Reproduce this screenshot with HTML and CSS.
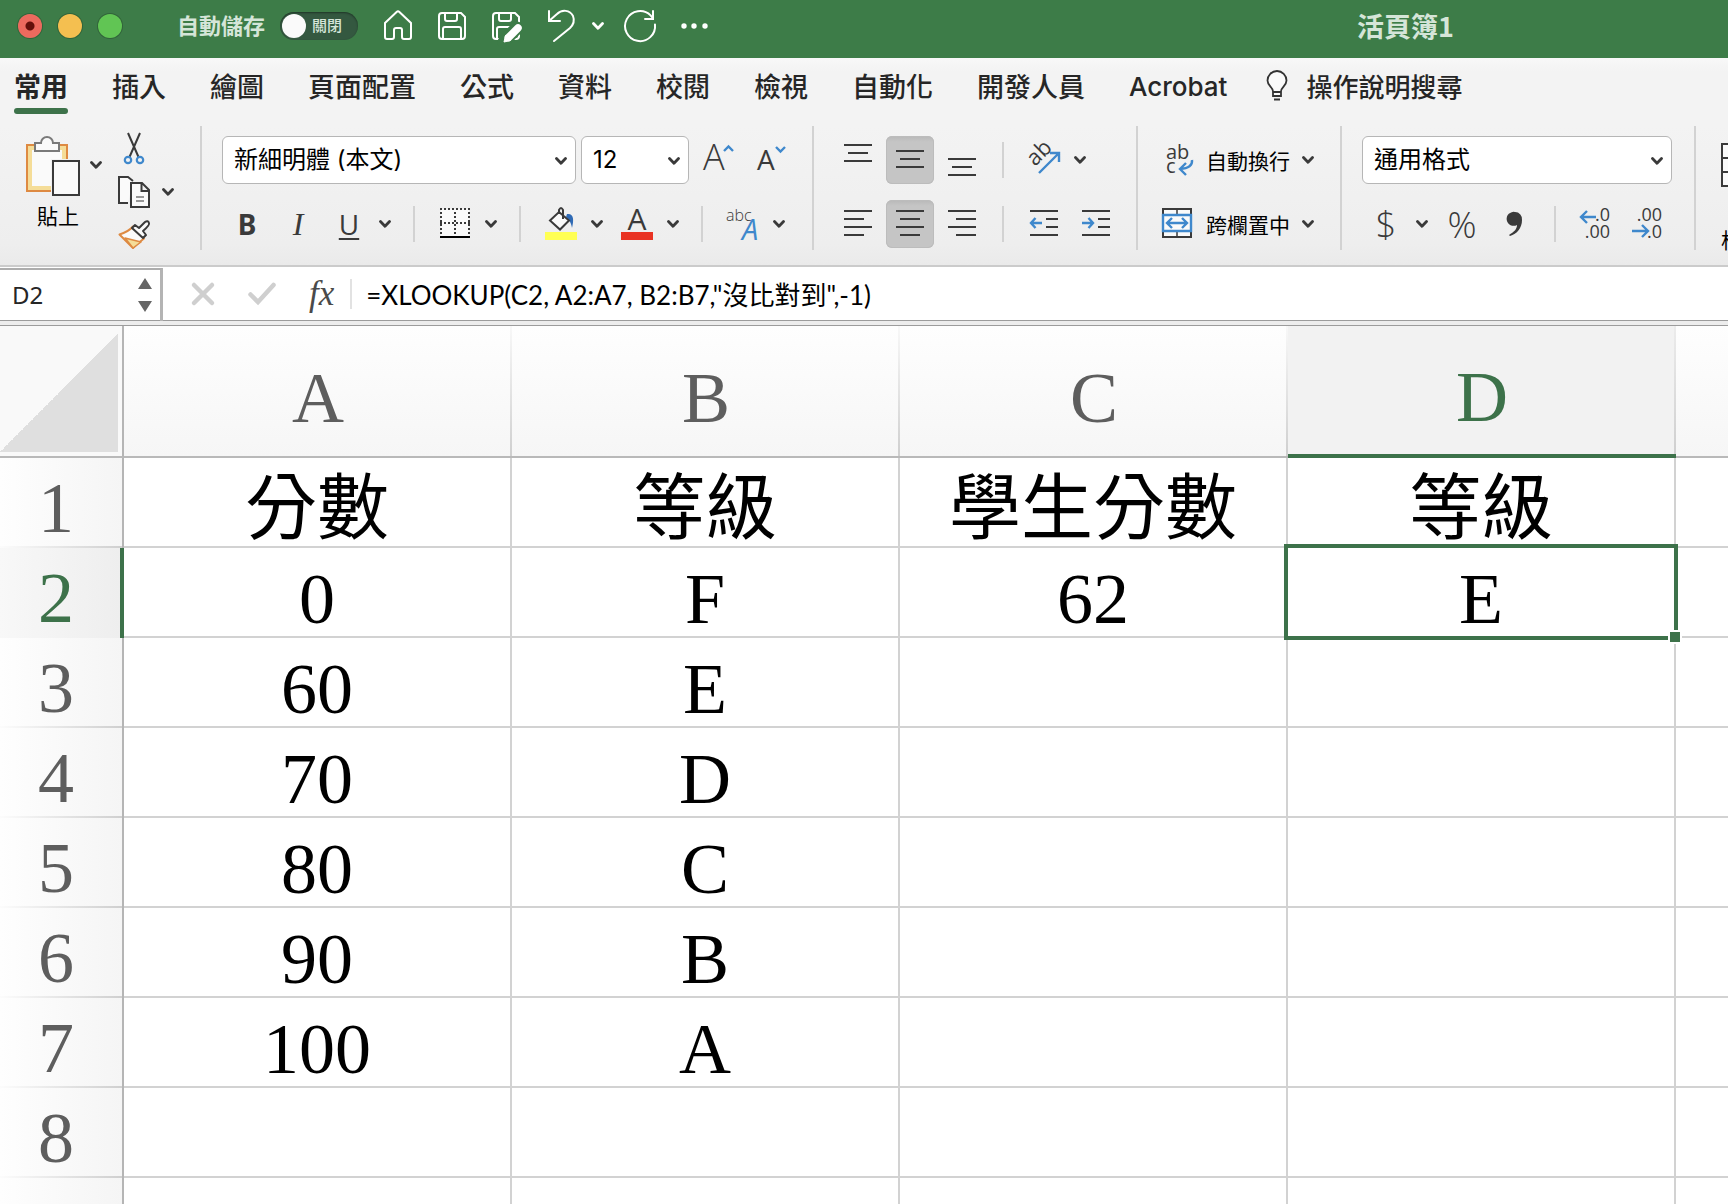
FILE: index.html
```html
<!DOCTYPE html>
<html lang="zh-Hant">
<head>
    <meta charset="UTF-8">
    <meta name="viewport" content="width=device-width, initial-scale=1.0">
    <title>活頁簿1</title>
    <link rel="stylesheet" href="styles.css">
</head>
<body>

<!-- Shared symbols -->
<svg class="sprite" aria-hidden="true">
    <symbol id="chevron" viewBox="0 0 12 8"><path d="M1.5 1.5L6 6.2L10.5 1.5" fill="none" stroke="currentColor" stroke-width="2.8" stroke-linecap="round" stroke-linejoin="round"/></symbol>
    <symbol id="floppy" viewBox="0 0 32 32"><path d="M6 3H25L29 7V26a3 3 0 0 1-3 3H6a3 3 0 0 1-3-3V6a3 3 0 0 1 3-3zM9 3v6a2 2 0 0 0 2 2h8a2 2 0 0 0 2-2V3M7 29V19a2 2 0 0 1 2-2h14a2 2 0 0 1 2 2v10" fill="none" stroke="currentColor" stroke-width="2"/></symbol>
</svg>

<!-- Title bar -->
<header class="titlebar">
    <div class="lights">
        <span class="light red"></span>
        <span class="light yellow"></span>
        <span class="light green"></span>
    </div>
    <label class="autosave">自動儲存
        <input type="checkbox">
        <span class="switch"><span class="knob"></span>關閉</span>
    </label>
    <div class="quick">
        <button aria-label="首頁"><svg width="32" height="32" fill="none" stroke="#fff" stroke-width="2"><path d="M3 13L14.6 2a2 2 0 0 1 2.8 0L29 13V27a2 2 0 0 1-2 2h-5a2 2 0 0 1-2-2v-7a2 2 0 0 0-2-2h-4a2 2 0 0 0-2 2v7a2 2 0 0 1-2 2H5a2 2 0 0 1-2-2z"/></svg></button>
        <button aria-label="儲存"><svg width="32" height="32"><use href="#floppy"/></svg></button>
        <button aria-label="另存新檔"><svg width="32" height="32"><use href="#floppy"/><path d="M27 18L18 27L14 32" stroke="#3d7c48" stroke-width="13" stroke-linecap="round" fill="none"/><path d="M28 18L18.500 27.500" stroke="#fff" stroke-width="7.500" stroke-linecap="round"/><path d="M15.500 25.500L14 32L20.500 30.500z" fill="#fff" stroke="#fff" stroke-linejoin="round"/></svg></button>
        <button class="undo" aria-label="復原"><svg width="32" height="32" fill="none" stroke="#fff" stroke-width="2" stroke-linecap="round"><path d="M5 1v10h11M5 11L13 4C18-1 26 0 29 6C31 11 29 15 26 18L10 31"/></svg><svg class="chev"><use href="#chevron"/></svg></button>
        <button aria-label="重複"><svg width="32" height="32" fill="none" stroke="#fff" stroke-width="2" stroke-linecap="round"><path d="M29 14.500A15 15 0 1 1 24.600 5.400L27 8.500M27 1v8h-8"/></svg></button>
        <button aria-label="更多"><svg width="32" height="32" fill="#fff"><circle cx="4" cy="16" r="2.700"/><circle cx="14" cy="16" r="2.700"/><circle cx="25" cy="16" r="2.700"/></svg></button>
    </div>
    <h1>活頁簿1</h1>
</header>

<!-- Ribbon tabs -->
<nav class="tabs">
    <a href="#" class="active">常用</a>
    <a href="#">插入</a>
    <a href="#">繪圖</a>
    <a href="#">頁面配置</a>
    <a href="#">公式</a>
    <a href="#">資料</a>
    <a href="#">校閱</a>
    <a href="#">檢視</a>
    <a href="#">自動化</a>
    <a href="#">開發人員</a>
    <a href="#" class="latin">Acrobat</a>
    <button class="tell-me">
        <svg width="22" height="32" fill="#fafafa" stroke="#333" stroke-width="1.800"><path d="M7 21.500C7 17 1.500 16 1.500 10.500a9.500 9.500 0 0 1 19 0C20.500 16 15 17 15 21.500V26H7zM7 22h8"/><path d="M8 29.500h6" stroke-width="2"/></svg>
        操作說明搜尋
    </button>
</nav>

<!-- Ribbon -->
<div class="ribbon">
    <div class="group clipboard">
        <button class="paste">
            <span class="paste-face">
                <svg width="56" height="62"><path d="M1 11h40v46H1z" fill="#f5dd98" stroke="#de8a42" stroke-width="2"/><path d="M6 16h30v36H6z" fill="#fafafa"/><path d="M25 25h20v37H25z" fill="#f1f1f1"/><path d="M9 17V9h6a6 6 0 0 1 12 0h6v8z" fill="#fafafa" stroke="#7a7a7a" stroke-width="2"/><path d="M27 27h26v34H27z" fill="#fafafa" stroke="#3a3a3a" stroke-width="2"/></svg>
                <span>貼上</span>
            </span>
            <svg class="chev"><use href="#chevron"/></svg>
        </button>
        <div class="clip-tools">
            <button aria-label="剪下"><svg width="32" height="32" fill="none"><path d="M10 1L20.500 25M22 1L11.500 25" stroke="#3a3a3a" stroke-width="2"/><circle cx="10" cy="28" r="3.200" stroke="#3f88cc" stroke-width="2.200"/><circle cx="22" cy="28" r="3.200" stroke="#3f88cc" stroke-width="2.200"/></svg></button>
            <button aria-label="複製"><svg width="32" height="32" fill="#fafafa" stroke="#3a3a3a" stroke-width="2"><path d="M10 27H1V1h9l5 4" /><path d="M13 7h11l7 7v17H13zM23.500 7v8H31"/><path d="M18 21h8M18 25h8" stroke="#777" stroke-width="1.500"/></svg><svg class="chev"><use href="#chevron"/></svg></button>
            <button aria-label="複製格式"><svg width="32" height="32" stroke-width="2" stroke-linejoin="round"><path d="M1.500 14.500Q10 12 15 6.500L26 18.500Q20 23 15 28z" fill="#fafafa" stroke="#de8a42"/><path d="M7 18L23 22L15 28z" fill="#f5dd98" stroke="#de8a42" stroke-width="1.500"/><path d="M14 8l3-3 4 3 6-6q3-2 4 1 1 2-6 8l3 4-3 3z" fill="#fafafa" stroke="#3a3a3a"/></svg></button>
        </div>
    </div>

    <div class="group font-group">
        <div class="row font-boxes">
            <span class="picker font-name"><select aria-label="字型"><option>新細明體 (本文)</option></select><svg class="chev"><use href="#chevron"/></svg></span>
            <span class="picker font-size"><select aria-label="字型大小"><option>12</option></select><svg class="chev"><use href="#chevron"/></svg></span>
            <button class="tool grow" aria-label="放大字型"><svg width="36" height="36"><text x="3" y="28" font-size="36">A</text><path class="blue" d="M24 9l4.500-4.500L33 9"/></svg></button>
            <button class="tool shrink" aria-label="縮小字型"><svg width="36" height="36"><text class="small" x="3" y="28" font-size="28">A</text><path class="blue" d="M22 5l4.500 4.500L31 5"/></svg></button>
        </div>
        <div class="row font-tools">
            <button class="tool bold">B</button>
            <button class="tool italic">I</button>
            <button class="tool split underline"><span>U</span><svg class="chev"><use href="#chevron"/></svg></button>
            <i class="sep"></i>
            <button class="tool split" aria-label="框線"><svg width="36" height="36" fill="none" stroke="#3a3a3a" stroke-width="2"><path d="M4 3h28v28H4z" fill="#fafafa" stroke="none"/><path d="M3 3h30M3 17h30M4 6v26M18 6v26M32 6v26" stroke-dasharray="2 2"/><path d="M3 31h30" stroke="#000"/></svg><svg class="chev"><use href="#chevron"/></svg></button>
            <i class="sep"></i>
            <button class="tool split" aria-label="填滿色彩"><svg width="36" height="36"><path d="M2 26h32v8H2z" fill="#ffff54"/><path d="M24 8c7-1 7 6 5 14-1-6-3-8-6-11z" fill="#2f6ab5"/><path d="M7 14.500L16 6L26 14.500L17 23.500z" fill="#fafafa" stroke="#3a3a3a" stroke-width="2"/><path d="M16 8V4q2-4 4 0v9" fill="none" stroke="#3a3a3a" stroke-width="2"/></svg><svg class="chev"><use href="#chevron"/></svg></button>
            <button class="tool split font-color" aria-label="字型色彩"><svg width="36" height="36"><path d="M2 26h32v8H2z" fill="#e93323"/><text class="small" x="18" y="24" font-size="30" text-anchor="middle">A</text></svg><svg class="chev"><use href="#chevron"/></svg></button>
            <i class="sep"></i>
            <button class="tool split" aria-label="注音標示"><svg width="36" height="36"><text x="1" y="15" font-size="16">abc</text><text class="small slant" x="17" y="34" font-size="29">A</text></svg><svg class="chev"><use href="#chevron"/></svg></button>
        </div>
    </div>

    <div class="group align-group">
        <div class="row">
            <button class="tool wide" aria-label="靠上對齊"><svg class="lines" width="36" height="36"><path d="M4 3h28M8 11h20M4 19h28"/></svg></button>
            <button class="tool wide on" aria-label="置中對齊"><svg class="lines" width="36" height="36"><path d="M4 9h28M8 17h20M4 25h28"/></svg></button>
            <button class="tool wide" aria-label="靠下對齊"><svg class="lines" width="36" height="36"><path d="M4 17h28M8 25h20M4 33h28"/></svg></button>
            <i class="sep"></i>
            <button class="tool split" aria-label="方向"><svg width="36" height="36"><text class="small" font-size="22" transform="translate(9 25) rotate(-45)">ab</text><path class="blue" d="M13 31L32 12M24 11h9v9"/></svg><svg class="chev"><use href="#chevron"/></svg></button>
        </div>
        <div class="row">
            <button class="tool wide" aria-label="靠左對齊"><svg class="lines" width="36" height="36"><path d="M4 5h28M4 13h20M4 21h28M4 29h20"/></svg></button>
            <button class="tool wide on" aria-label="水平置中"><svg class="lines" width="36" height="36"><path d="M4 5h28M8 13h20M4 21h28M8 29h20"/></svg></button>
            <button class="tool wide" aria-label="靠右對齊"><svg class="lines" width="36" height="36"><path d="M4 5h28M12 13h20M4 21h28M12 29h20"/></svg></button>
            <i class="sep"></i>
            <button class="tool" aria-label="減少縮排"><svg class="lines" width="36" height="36"><path d="M4 5h28M20 13h12M20 21h12M4 29h28"/><path class="blue" d="M16 17H5M9.500 12L5 17l4.500 5"/></svg></button>
            <button class="tool indent" aria-label="增加縮排"><svg class="lines" width="36" height="36"><path d="M4 5h28M20 13h12M20 21h12M4 29h28"/><path class="blue" d="M4 17h11M10.500 12L15 17l-4.500 5"/></svg></button>
        </div>
    </div>

    <div class="group wrap-group">
        <div class="row">
            <button class="tool labelled"><svg width="36" height="36"><text class="small" x="8" y="17" font-size="20">ab</text><text class="small" x="8" y="31" font-size="20">c</text><path class="blue" d="M34 18q1 8-12 9M28 21l-6 6 6 6"/></svg>自動換行<svg class="chev"><use href="#chevron"/></svg></button>
        </div>
        <div class="row">
            <button class="tool labelled"><svg width="36" height="36" fill="#fafafa" stroke="#3a3a3a" stroke-width="2"><path d="M5 3h28v28H5z"/><path d="M19 3v28" stroke-width="1.500"/><path class="blue boxed" d="M5 9h28v16H5z"/><path class="blue" d="M9 17h20M14 12l-5 5 5 5M24 12l5 5-5 5"/></svg>跨欄置中<svg class="chev"><use href="#chevron"/></svg></button>
        </div>
    </div>

    <div class="group number-group">
        <div class="row">
            <span class="picker number-format"><select aria-label="數值格式"><option>通用格式</option></select><svg class="chev"><use href="#chevron"/></svg></span>
        </div>
        <div class="row number-tools">
            <button class="tool split symbol"><span>$</span><svg class="chev"><use href="#chevron"/></svg></button>
            <button class="tool symbol percent">%</button>
            <button class="tool comma" aria-label="千分位"><svg width="36" height="36" fill="#3a3a3a"><path d="M19 6a7 7 0 0 1 7 8c0 8-5 14-12 16l-1-1c5-3 8-6 8-10a7 7 0 1 1-2-13z"/></svg></button>
            <i class="sep"></i>
            <button class="tool" aria-label="增加小數位數"><svg width="36" height="36"><text class="small" x="32" y="15" font-size="18" text-anchor="end">.0</text><text class="small" x="32" y="32" font-size="18" text-anchor="end">.00</text><path class="blue" d="M18 11H3M9 5l-6 6 6 6"/></svg></button>
            <button class="tool indent" aria-label="減少小數位數"><svg width="36" height="36"><text class="small" x="32" y="15" font-size="18" text-anchor="end">.00</text><text class="small" x="32" y="32" font-size="18" text-anchor="end">.0</text><path class="blue" d="M2 25h16M12 19l6 6-6 6"/></svg></button>
        </div>
    </div>

    <div class="group styles-group">
        <button class="cond-format">
            <svg width="56" height="46" fill="#fafafa" stroke="#3a3a3a" stroke-width="2"><path d="M1 2h54v42H1zM1 16h54M1 30h54M19 2v42"/></svg>
            <span>格式化條件</span>
        </button>
    </div>
</div>

<!-- Formula bar -->
<div class="formula-bar">
    <div class="name-box">
        <input type="text" value="D2" aria-label="名稱方塊">
        <button aria-label="切換名稱"><svg width="14" height="34" fill="#666"><path d="M7 0l7 11H0zM7 34l7-11H0z"/></svg></button>
    </div>
    <button class="fx-cancel" aria-label="取消"><svg width="24" height="24"><path d="M3 3L21 21M21 3L3 21" stroke="#cfcfcf" stroke-width="4.500" stroke-linecap="round"/></svg></button>
    <button class="fx-ok" aria-label="輸入"><svg width="28" height="24" fill="none"><path d="M2.500 12.500L10 20L25.500 3" stroke="#cfcfcf" stroke-width="4.500" stroke-linecap="round"/></svg></button>
    <button class="fx-insert"><i>fx</i></button>
    <input class="formula" type="text" value='=XLOOKUP(C2, A2:A7, B2:B7,"沒比對到",-1)' aria-label="公式">
</div>

<!-- Sheet -->
<main class="sheet">
    <table>
        <colgroup>
            <col class="col-head"><col class="col"><col class="col"><col class="col"><col class="col"><col>
        </colgroup>
        <thead>
            <tr><th class="corner"></th><th>A</th><th>B</th><th>C</th><th class="current">D</th><th class="rest"></th></tr>
        </thead>
        <tbody>
            <tr><th>1</th><td>分數</td><td>等級</td><td>學生分數</td><td>等級</td><td></td></tr>
            <tr><th class="current">2</th><td>0</td><td>F</td><td>62</td><td class="selected">E</td><td></td></tr>
            <tr><th>3</th><td>60</td><td>E</td><td></td><td></td><td></td></tr>
            <tr><th>4</th><td>70</td><td>D</td><td></td><td></td><td></td></tr>
            <tr><th>5</th><td>80</td><td>C</td><td></td><td></td><td></td></tr>
            <tr><th>6</th><td>90</td><td>B</td><td></td><td></td><td></td></tr>
            <tr><th>7</th><td>100</td><td>A</td><td></td><td></td><td></td></tr>
            <tr><th>8</th><td></td><td></td><td></td><td></td><td></td></tr>
            <tr><th>9</th><td></td><td></td><td></td><td></td><td></td></tr>
        </tbody>
    </table>
</main>

</body>
</html>
```

FILE: styles.css
```css
/* General styling */
* {
    box-sizing: border-box;
}

body {
    margin: 0;
    height: 100vh;
    overflow: hidden;
    display: flex;
    flex-direction: column;
    background: #fff;
    color: #000;
    font-family: Inter, "Noto Sans CJK TC", sans-serif;
}

button {
    display: flex;
    align-items: center;
    flex: none;
    padding: 0;
    border: 0;
    background: none;
    color: #000;
    font-family: inherit;
}

svg {
    display: block;
    flex: none;
    overflow: visible;
}

.sprite {
    position: absolute;
    width: 0;
    height: 0;
}

.chev {
    width: 12px;
    height: 8px;
    color: #3a3a3a;
}

/* Title bar */
.titlebar {
    flex: none;
    display: flex;
    align-items: center;
    height: 58px;
    padding: 0 274px 6px 18px;
    background: #3d7c48;
    color: #fff;
}

.lights {
    display: flex;
    gap: 16px;
}

.light {
    width: 24px;
    height: 24px;
    border-radius: 50%;
    box-shadow: 0 0 0 1px rgba(0, 0, 0, 0.2);
}

.red {
    background: radial-gradient(circle, #64100b 4px, #ec6a5e 5px);
}

.yellow {
    background: #f4bf50;
}

.green {
    background: #61c554;
}

.autosave {
    display: flex;
    align-items: center;
    gap: 15px;
    margin-left: 55px;
    font-size: 22px;
    font-weight: 700;
    line-height: 28px;
    color: #d5e5d8;
}

.autosave input {
    position: absolute;
    opacity: 0;
}

.switch {
    display: flex;
    align-items: center;
    gap: 6px;
    width: 78px;
    height: 28px;
    padding-left: 2px;
    border-radius: 14px;
    background: #345840;
    box-shadow: inset 0 1px 2px rgba(0, 0, 0, 0.4);
    font-size: 15px;
    font-weight: 500;
}

.knob {
    width: 24px;
    height: 24px;
    border-radius: 50%;
    background: #fafafa;
}

.quick {
    display: flex;
    gap: 22px;
    margin-left: 24px;
}

.quick button,
.quick .chev {
    color: #fff;
}

.undo {
    gap: 16px;
}

h1 {
    margin: 0 0 0 auto;
    font-family: "Noto Sans CJK TC", sans-serif;
    font-size: 27px;
    line-height: 32px;
    color: #d5e5d8;
}

/* Tabs */
.tabs {
    flex: none;
    display: flex;
    gap: 44px;
    height: 68px;
    padding: 10px 14px 0;
    background: linear-gradient(#f8f8f8, #f3f3f3 20%);
    font-size: 27px;
    font-weight: 500;
    line-height: 36px;
    white-space: nowrap;
}

.tabs a {
    height: 46px;
    color: #262626;
    font-family: "Noto Sans CJK TC", sans-serif;
    text-decoration: none;
}

.tabs .latin {
    font-family: Inter, sans-serif;
    font-size: 26px;
    line-height: 38px;
}

.tabs .active {
    position: relative;
    font-weight: 700;
}

.tabs .active::after {
    content: "";
    position: absolute;
    left: 0;
    right: 0;
    bottom: 0;
    height: 6px;
    border-radius: 3px;
    background: #3d724a;
}

.tell-me {
    gap: 18px;
    height: 36px;
    margin-left: -5px;
    color: #262626;
    font-family: "Noto Sans CJK TC", sans-serif;
    font-size: 26px;
    font-weight: 500;
    line-height: 36px;
}

/* Ribbon */
.ribbon {
    flex: none;
    display: flex;
    height: 141px;
    padding-bottom: 15px;
    overflow: hidden;
    background: linear-gradient(#f3f3f3, #eeeeee 85%, #eaeaea);
    border-bottom: 2px solid #cbcbcb;
}

.group {
    flex: none;
    display: flex;
    flex-direction: column;
    gap: 16px;
    padding: 10px 22px 0 20px;
    border-right: 2px solid #d2d2d2;
}

.row {
    display: flex;
    align-items: center;
    height: 48px;
}

.tool {
    justify-content: center;
    width: 36px;
    height: 48px;
    color: #3a3a3a;
}

.tool text {
    fill: #3a3a3a;
    font-family: "Open Sans", sans-serif;
    font-weight: 300;
}

.tool .small {
    font-weight: 400;
}

.tool .slant {
    fill: #3f88cc;
    font-style: italic;
}

.lines {
    stroke: #3a3a3a;
    stroke-width: 2;
}

.tool .blue {
    fill: none;
    stroke: #3f88cc;
    stroke-width: 2.4;
}

.tool .boxed {
    fill: #fafafa;
}

.split {
    justify-content: flex-start;
    gap: 12px;
    width: 60px;
    margin-right: 4px;
}

.split span {
    width: 36px;
    text-align: center;
}

.wide {
    width: 48px;
    margin-right: 4px;
    border-radius: 6px;
}

.on {
    background: linear-gradient(#b8b8b8, #c5c5c5 12%);
    box-shadow: inset 0 0 0 1px #bcbcbc;
}

.sep {
    width: 2px;
    height: 36px;
    margin: 0 22px 0 18px;
    background: #d2d2d2;
}

/* Clipboard */
.clipboard {
    flex-direction: row;
    gap: 16px;
    padding: 6px 26px 0 26px;
}

.paste {
    align-items: flex-start;
    gap: 8px;
    padding-top: 2px;
    font-size: 21px;
    line-height: 30px;
}

.paste .chev {
    margin-top: 27px;
}

.paste-face {
    display: flex;
    flex-direction: column;
    align-items: center;
    gap: 6px;
}

.paste-face span {
    padding-left: 8px;
}

.clip-tools {
    display: flex;
    flex-direction: column;
    gap: 12px;
}

.clip-tools button {
    gap: 12px;
}

/* Drop-downs */
.picker {
    position: relative;
    height: 48px;
}

.picker select {
    width: 100%;
    height: 48px;
    padding: 0 36px 2px 11px;
    appearance: none;
    border: 1px solid #b6b6b6;
    border-radius: 6px;
    background: #fff;
    color: #000;
    font-family: Inter, "Noto Sans CJK TC", sans-serif;
    font-size: 24px;
}

.picker .chev {
    position: absolute;
    right: 9px;
    top: 21px;
    pointer-events: none;
}

.font-name {
    width: 354px;
}

.font-size {
    width: 108px;
    margin-left: 5px;
}

.number-format {
    width: 310px;
}

/* Font tools */
.grow {
    margin-left: 11px;
}

.shrink {
    margin-left: 18px;
}

.font-tools {
    padding-left: 7px;
}

.bold {
    font-family: "Noto Sans", sans-serif;
    font-size: 28px;
    font-weight: 700;
}

.italic {
    margin: 0 15px;
    font-family: "Liberation Serif", serif;
    font-size: 32px;
    font-style: italic;
}

.underline {
    font-family: "Open Sans", sans-serif;
    font-size: 28px;
    font-weight: 400;
}

.underline span {
    text-decoration: underline;
    text-decoration-thickness: 2px;
    text-underline-offset: 3px;
}

.font-color {
    margin-left: 12px;
}

.align-group .sep {
    margin-left: 12px;
}

.indent {
    margin-left: 16px;
}

.labelled {
    gap: 12px;
    width: auto;
    padding-right: 4px;
    color: #000;
    font-size: 21px;
}

/* Number tools */
.number-tools {
    padding-left: 6px;
}

.symbol {
    font-family: "Open Sans", sans-serif;
    font-size: 36px;
    font-weight: 300;
}

.percent {
    margin: 0 16px 0 12px;
}

.number-tools .sep {
    margin-left: 22px;
}

.styles-group {
    padding-left: 25px;
}

.cond-format {
    flex-direction: column;
    align-items: flex-start;
    gap: 38px;
    padding-top: 6px;
    font-size: 21px;
    line-height: 30px;
    white-space: nowrap;
}

/* Formula bar */
.formula-bar {
    flex: none;
    display: flex;
    align-items: center;
    height: 59px;
    padding-bottom: 4px;
    border-bottom: 1px solid #9c9c9c;
    background: linear-gradient(#fff 53px, #9c9c9c 53px, #9c9c9c 54px, #ededed 54px);
}

.name-box {
    flex: none;
    display: flex;
    align-items: center;
    width: 163px;
    height: 53px;
    padding-right: 8px;
    border-top: 2px solid #adadad;
    border-right: 3px solid #b4b4b4;
}

.name-box input {
    width: 100%;
    min-width: 0;
    padding: 0 12px 2px;
    border: 0;
    color: #262626;
    font-family: "Noto Sans", sans-serif;
    font-size: 24px;
}

.fx-cancel {
    margin-left: 28px;
}

.fx-ok {
    margin-left: 33px;
}

.fx-insert {
    height: 30px;
    margin-left: 33px;
    padding-right: 16px;
    border-right: 2px solid #e2e2e2;
    color: #4a4a4a;
    font-family: "Liberation Serif", serif;
    font-size: 35px;
}

.formula {
    flex: 1;
    min-width: 0;
    margin-left: 10px;
    padding: 0 4px 2px;
    border: 0;
    font-family: Lato, "Noto Sans CJK TC", sans-serif;
    font-size: 26px;
}

/* Sheet */
.sheet {
    flex: 1;
    min-height: 0;
    overflow: hidden;
}

table {
    width: 100%;
    table-layout: fixed;
    border-collapse: separate;
    border-spacing: 0;
    font-family: "Liberation Serif", "Noto Sans CJK TC", serif;
    font-size: 72px;
    line-height: 74px;
}

.col-head {
    width: 124px;
}

.col {
    width: 388px;
}

th,
td {
    height: 90px;
    padding: 14px 0 0;
    font-weight: 400;
    text-align: center;
    white-space: nowrap;
}

td {
    border-right: 2px solid #d2d2d2;
    border-bottom: 2px solid #d2d2d2;
}

td:last-child {
    border-right: 0;
}

thead th {
    height: 132px;
    border-bottom: 2px solid #b9b9b9;
    background: linear-gradient(#f8f8f8, #cfcfcf) right / 2px 100% no-repeat, linear-gradient(#fefefe, #f6f6f6);
    color: #5e5e5e;
}

tbody th {
    padding: 10px 10px 0 0;
    border-right: 2px solid #b5b5b5;
    background: linear-gradient(90deg, #fcfcfc, #cfcfcf) bottom / 100% 2px no-repeat, linear-gradient(90deg, #fefefe, #f5f5f5);
    color: #5e5e5e;
}

thead .corner {
    border-right: 2px solid #b5b5b5;
    background: linear-gradient(to bottom right, transparent 50%, #dfdfdf 50%) 0 8px / 118px 118px no-repeat, #f9f9f9;
}

thead .current {
    border-bottom: 4px solid #3d724a;
    background: linear-gradient(#ececec, #cfcfcf) right / 2px 100% no-repeat, #f2f2f2;
    color: #3d724a;
}

thead .rest {
    background: linear-gradient(#fefefe, #f6f6f6);
}

tbody .current {
    padding-right: 8px;
    border-right: 4px solid #3d724a;
    background: linear-gradient(90deg, #f8f8f8, #eeeeee);
    color: #3d724a;
}

.selected {
    position: relative;
}

/* selection frame and its fill handle */
.selected::before {
    content: "";
    position: absolute;
    inset: -4px;
    border: 4px solid #3d724a;
}

.selected::after {
    content: "";
    position: absolute;
    right: -6px;
    bottom: -6px;
    width: 10px;
    height: 10px;
    background: #3d724a;
    box-shadow: 0 0 0 2px #fff;
}
```
